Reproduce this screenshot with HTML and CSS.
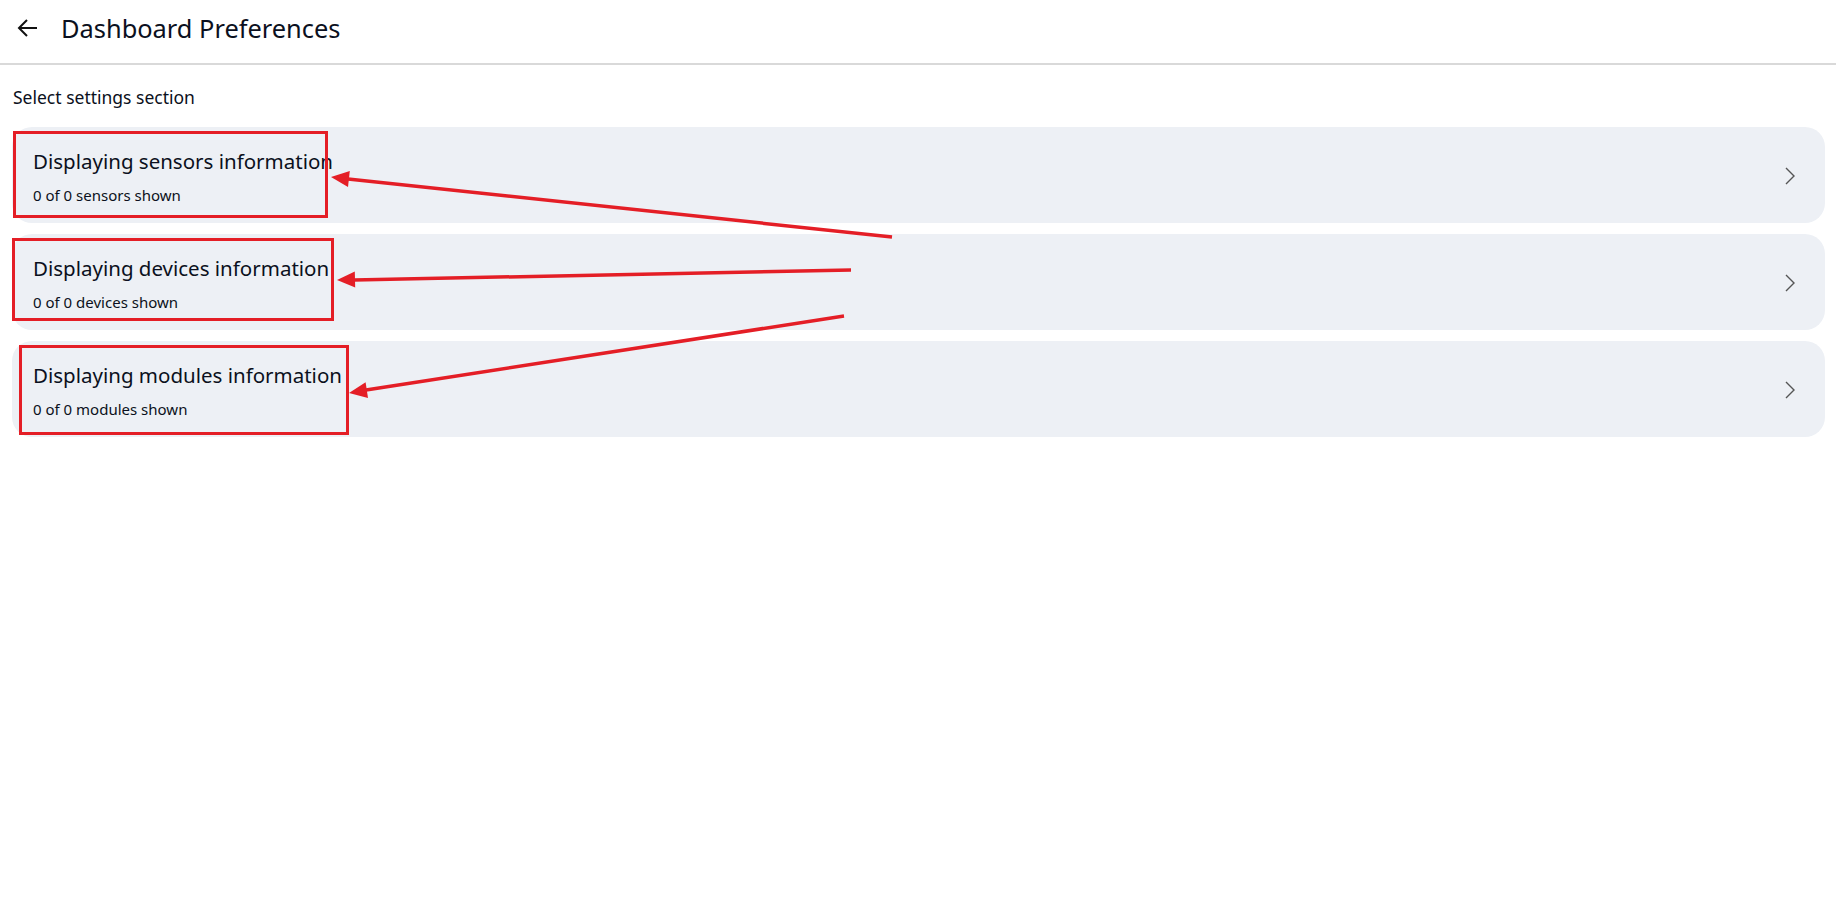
FILE: index.html
```html
<!DOCTYPE html>
<html>
<head>
  <meta charset="UTF-8">
  <title>Dashboard Preferences</title>
  <link rel="stylesheet" href="styles.css">
</head>
<body>
  <header class="barra">
    <button class="volver" aria-label="Back">
      <svg width="22" height="20" viewBox="0 0 22 20">
        <path d="M20 10H2M10 2L2 10l8 8" fill="none" stroke="#111" stroke-width="2"/>
      </svg>
    </button>
    <h1>Dashboard Preferences</h1>
  </header>

  <main class="contenido">
    <p class="etiqueta">Select settings section</p>

    <ul class="secciones">
      <li class="seccion">
        <div class="info">
          <h3>Displaying sensors information</h3>
          <p>0 of 0 sensors shown</p>
        </div>
        <svg class="flecha" width="24" height="24" viewBox="0 0 24 24">
          <path d="M8 4l8 8-8 8" fill="none" stroke="#555" stroke-width="1.4"/>
        </svg>
      </li>
      <li class="seccion">
        <div class="info">
          <h3>Displaying devices information</h3>
          <p>0 of 0 devices shown</p>
        </div>
        <svg class="flecha" width="24" height="24" viewBox="0 0 24 24">
          <path d="M8 4l8 8-8 8" fill="none" stroke="#555" stroke-width="1.4"/>
        </svg>
      </li>
      <li class="seccion">
        <div class="info">
          <h3>Displaying modules information</h3>
          <p>0 of 0 modules shown</p>
        </div>
        <svg class="flecha" width="24" height="24" viewBox="0 0 24 24">
          <path d="M8 4l8 8-8 8" fill="none" stroke="#555" stroke-width="1.4"/>
        </svg>
      </li>
    </ul>
  </main>

  <!-- anotaciones encima de la captura -->
  <svg class="notas" width="1836" height="901" viewBox="0 0 1836 901">
    <g fill="none" stroke="#e41e26" stroke-width="3">
      <rect x="14.5" y="132.5" width="312" height="84"/>
      <rect x="13.5" y="239.5" width="319" height="80"/>
      <rect x="20.5" y="346.5" width="327" height="87"/>
    </g>
    <g stroke="#e41e26" stroke-width="3.5">
      <line x1="348" y1="179" x2="892" y2="237"/>
      <line x1="354" y1="280" x2="851" y2="270"/>
      <line x1="366" y1="390" x2="844" y2="316"/>
    </g>
    <g fill="#e41e26">
      <polygon points="331,177 349.8,171 348,186.9"/>
      <polygon points="337,280 354.8,271.6 355.2,287.6"/>
      <polygon points="349,393 365.6,382.3 368,398.1"/>
    </g>
  </svg>
</body>
</html>
```

FILE: styles.css
```css
/* Estilos generales */
body {
  font-family: 'Noto Sans', sans-serif;
  margin: 0;
  padding: 0;
  color: #0b1020;
  background: #fff;
}

.barra {
  display: flex;
  align-items: center;
  height: 65px;
  box-sizing: border-box;
  padding: 0 0 7px 17px;
  border-bottom: 2px solid #d9d9d9;
}

.volver {
  display: flex;
  border: none;
  background: none;
  padding: 0;
  margin-right: 22px;
  cursor: pointer;
}

.barra h1 {
  margin: 0;
  font-size: 25.4px;
  font-weight: 400;
  line-height: 36px;
}

.contenido {
  padding: 20px 11px 0 12px;
}

.etiqueta {
  margin: 0 0 18px 1px;
  font-size: 17.5px;
  line-height: 24px;
}

/* Lista de secciones */
.secciones {
  list-style-type: none;
  margin: 0;
  padding: 0;
  display: flex;
  flex-direction: column;
  gap: 11px;
}

.seccion {
  display: flex;
  align-items: center;
  justify-content: space-between;
  background-color: #edf0f5;
  border-radius: 20px;
  padding: 20px 23px 18px 21px;
  cursor: pointer;
}

.info h3 {
  margin: 0;
  font-size: 20.5px;
  font-weight: 400;
  line-height: 28px;
}

.info p {
  margin: 10px 0 0;
  font-size: 15px;
  line-height: 20px;
}

.notas {
  position: absolute;
  left: 0;
  top: 0;
  pointer-events: none;
}
```
